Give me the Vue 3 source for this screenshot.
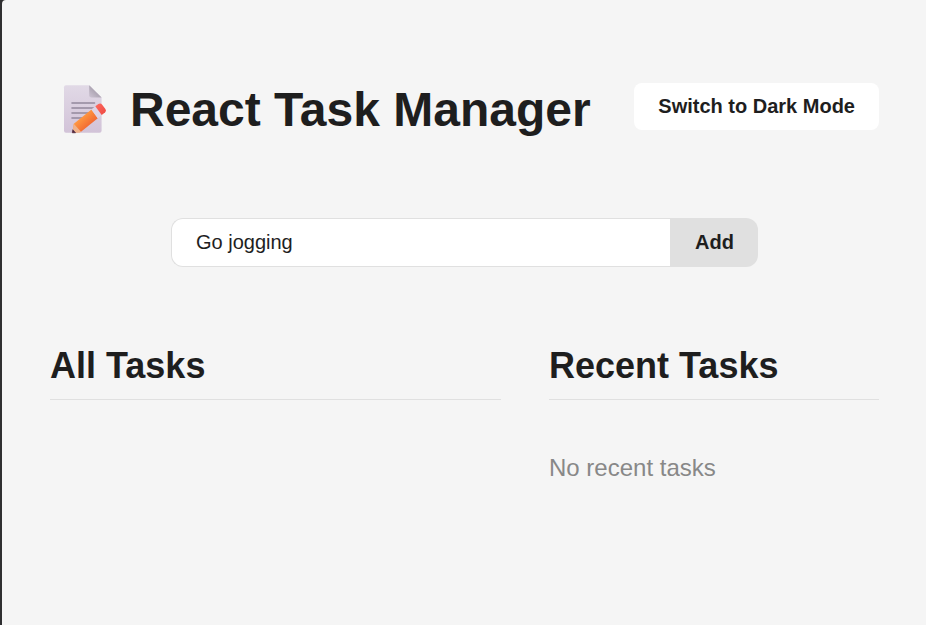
<script setup>
import { ref } from 'vue'

const draft = ref('Go jogging')
const recent = ref([])
</script>

<template>
  <div class="window">
    <main class="page">
      <header class="header">
        <h1 class="title">
          <svg class="memo" viewBox="0 0 44 50" aria-hidden="true">
            <defs>
              <linearGradient id="paper" x1="0" y1="0" x2="0" y2="1">
                <stop offset="0" stop-color="#e1d9e6" />
                <stop offset="1" stop-color="#d2c3d8" />
              </linearGradient>
              <linearGradient id="fold" x1="1" y1="0" x2="0" y2="1">
                <stop offset="0.45" stop-color="#aaa2b0" />
                <stop offset="1" stop-color="#cdc4d3" />
              </linearGradient>
              <linearGradient id="body" x1="0.2" y1="0.2" x2="0.8" y2="0.8">
                <stop offset="0.2" stop-color="#ff9a42" />
                <stop offset="0.8" stop-color="#f26a33" />
              </linearGradient>
              <linearGradient id="eraser" x1="0" y1="0" x2="1" y2="1">
                <stop offset="0" stop-color="#ff6b60" />
                <stop offset="1" stop-color="#ed4942" />
              </linearGradient>
            </defs>
            <path d="M3 1.2H26.2L38.6 13.4V46.7Q38.6 48.8 36.5 48.8H3Q1 48.8 1 46.7V3.2Q1 1.2 3 1.2Z" fill="url(#paper)" />
            <path d="M26.2 1.2L38.6 13.4H28.2Q26.2 13.4 26.2 11.4Z" fill="url(#fold)" />
            <path d="M9 19H31.5M9 24H31.5M9 29H28M9 34H23" stroke="#92889c" stroke-width="1.6" stroke-linecap="round" />
            <path d="M10.8 39.8L28.5 25.5L34.8 34.3L18 47.8L9.5 48.8Z" fill="url(#body)" />
            <path d="M10.8 39.8L18 47.8L16.8 48.8H9.3Z" fill="#efb28b" />
            <path d="M9.8 45.7L12.6 48.8H9.3Z" fill="#4b2642" stroke="#4b2642" stroke-width="0.6" />
            <path d="M28.3 25.6L32.3 22.2L38.7 31L34.7 34.3Z" fill="#ded3e5" />
            <path d="M32.3 22.2L35.4 20.1Q37.6 18.8 39.2 20.8L42.4 25Q43.8 26.9 42 28.4L38.7 31Z" fill="url(#eraser)" />
          </svg>
          <span>React Task Manager</span>
        </h1>
        <button class="mode" type="button">Switch to Dark Mode</button>
      </header>

      <form class="entry" @submit.prevent>
        <input v-model="draft" class="field" type="text" />
        <button class="add" type="submit">Add</button>
      </form>

      <div class="columns">
        <section>
          <h2 class="heading">All Tasks</h2>
        </section>
        <section>
          <h2 class="heading">Recent Tasks</h2>
          <p v-if="!recent.length" class="empty">No recent tasks</p>
        </section>
      </div>
    </main>
  </div>
</template>

<style>
body {
  margin: 0;
  background: #2f2f31;
}
</style>

<style scoped>
.window {
  box-sizing: border-box;
  height: 625px;
  padding-left: 2px;
  overflow: hidden;
  color: #1e1e1e;
  font-family: Arial, "Liberation Sans", sans-serif;
}
.page {
  box-sizing: border-box;
  height: 100%;
  padding: 82px 47px 0 48px;
  background: #f5f5f5;
  border-top-left-radius: 4px;
}
.header {
  display: flex;
  align-items: flex-start;
  justify-content: space-between;
}
.title {
  display: flex;
  align-items: flex-start;
  margin: 0;
  padding-left: 13px;
  font-size: 48px;
  line-height: 56px;
  white-space: nowrap;
}
.memo {
  width: 44px;
  height: 50px;
  margin: 2px 23px 0 0;
}
.mode {
  height: 47px;
  margin: 1px 0 0;
  padding: 0 24px;
  border: 0;
  border-radius: 8px;
  background: #fff;
  color: inherit;
  font: bold 20px Arial, "Liberation Sans", sans-serif;
  white-space: nowrap;
}
.entry {
  display: flex;
  width: 587px;
  height: 49px;
  margin: 80px auto 0;
}
.field {
  box-sizing: border-box;
  flex: 1;
  min-width: 0;
  padding: 0 24px;
  border: 1px solid #e0e0e0;
  border-right: 0;
  border-radius: 12px 0 0 12px;
  outline: 0;
  background: #fff;
  color: inherit;
  font: 20px Arial, "Liberation Sans", sans-serif;
}
.add {
  width: 88px;
  padding: 0 0 0 1px;
  border: 0;
  border-radius: 0 12px 12px 0;
  background: #e0e0e0;
  color: inherit;
  font: bold 20px Arial, "Liberation Sans", sans-serif;
}
.columns {
  display: grid;
  grid-template-columns: 451px 330px;
  gap: 48px;
  margin-top: 78px;
}
.heading {
  margin: 0;
  padding-bottom: 13px;
  border-bottom: 1px solid #e0e0e0;
  font-size: 36px;
  line-height: 41px;
}
.empty {
  margin: 54px 0 0;
  color: #888;
  font-size: 24px;
  line-height: 28px;
}
</style>
